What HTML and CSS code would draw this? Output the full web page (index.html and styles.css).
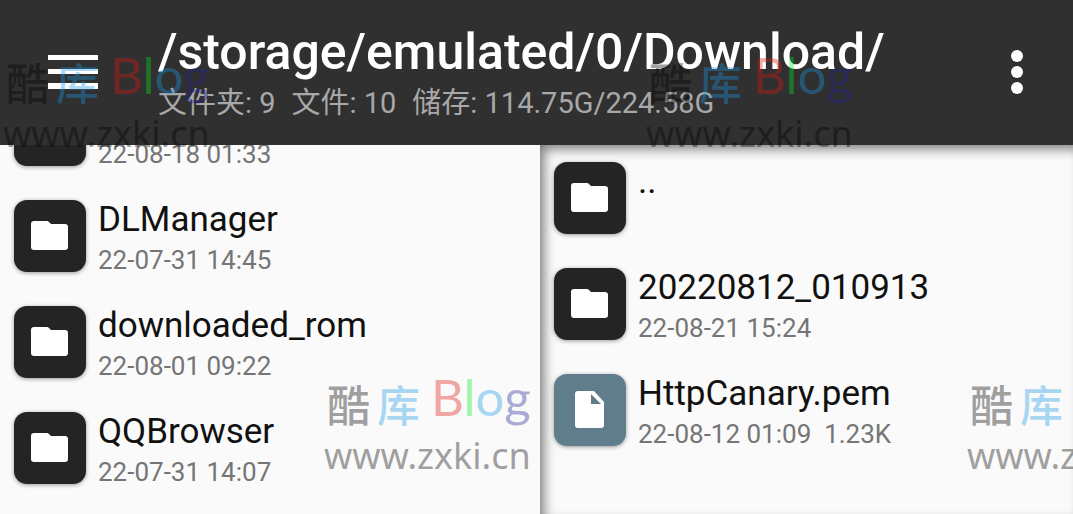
FILE: index.html
```html
<!DOCTYPE html>
<html lang="zh-CN">
<head>
    <meta charset="UTF-8">
    <meta name="viewport" content="width=device-width, initial-scale=1.0">
    <title>/storage/emulated/0/Download/</title>
    <link rel="stylesheet" href="styles.css">
</head>
<body>
    <svg class="sprite" aria-hidden="true">
        <symbol id="folder" viewBox="0 0 72 72">
            <path d="M20 21h13q1 0 2 1l2 2h14q3 0 3 3v20q0 3-3 3H20q-3 0-3-3V24q0-3 3-3z"/>
        </symbol>
        <symbol id="file" viewBox="0 0 72 72">
            <path fill-rule="evenodd" d="M24 17h16l10 11v23q0 3-3 3H24q-3 0-3-3V20q0-3 3-3zM37 20v10h10z"/>
        </symbol>
    </svg>

    <header class="toolbar">
        <button class="menu-btn" type="button" aria-label="菜单">
            <svg width="50" height="34" viewBox="0 0 50 34"><path d="M0 0h50v5H0zM0 14h50v5H0zM0 28h50v6H0z"/></svg>
        </button>
        <div class="heading">
            <h1>/storage/emulated/0/Download/</h1>
            <p class="stats">
                <span>文件夹: 9</span>
                <span>文件: 10</span>
                <span>储存: 114.75G/224.58G</span>
            </p>
        </div>
        <button class="more-btn" type="button" aria-label="更多">
            <svg width="12" height="44" viewBox="0 0 12 44"><circle cx="6" cy="6" r="6"/><circle cx="6" cy="22" r="6"/><circle cx="6" cy="38" r="6"/></svg>
        </button>
    </header>

    <main class="panes">
        <section class="pane">
            <ul class="list scrolled">
                <li class="row">
                    <svg class="icon"><use href="#folder"/></svg>
                    <div class="info"><span class="name"></span><span class="date">22-08-18 01:33</span></div>
                </li>
                <li class="row">
                    <svg class="icon"><use href="#folder"/></svg>
                    <div class="info"><span class="name">DLManager</span><span class="date">22-07-31 14:45</span></div>
                </li>
                <li class="row">
                    <svg class="icon"><use href="#folder"/></svg>
                    <div class="info"><span class="name">downloaded_rom</span><span class="date">22-08-01 09:22</span></div>
                </li>
                <li class="row">
                    <svg class="icon"><use href="#folder"/></svg>
                    <div class="info"><span class="name">QQBrowser</span><span class="date">22-07-31 14:07</span></div>
                </li>
            </ul>
        </section>
        <section class="pane active">
            <ul class="list">
                <li class="row">
                    <svg class="icon"><use href="#folder"/></svg>
                    <div class="info"><span class="name">..</span></div>
                </li>
                <li class="row">
                    <svg class="icon"><use href="#folder"/></svg>
                    <div class="info"><span class="name">20220812_010913</span><span class="date">22-08-21 15:24</span></div>
                </li>
                <li class="row">
                    <svg class="icon file"><use href="#file"/></svg>
                    <div class="info"><span class="name">HttpCanary.pem</span><span class="date">22-08-12 01:09 &nbsp;1.23K</span></div>
                </li>
            </ul>
        </section>
    </main>

    <!-- Watermarks -->
    <div class="watermark wm-1">
        <div class="brand"><span class="cjk">酷</span><span class="cjk blue">库</span><span class="blog"><i class="red">B</i><i class="green">l</i><i class="blue">o</i><i class="navy">g</i></span></div>
        <div class="site">www.zxki.cn</div>
    </div>
    <div class="watermark wm-2">
        <div class="brand"><span class="cjk">酷</span><span class="cjk blue">库</span><span class="blog"><i class="red">B</i><i class="green">l</i><i class="blue">o</i><i class="navy">g</i></span></div>
        <div class="site">www.zxki.cn</div>
    </div>
    <div class="watermark wm-3">
        <div class="brand"><span class="cjk">酷</span><span class="cjk blue">库</span><span class="blog"><i class="red">B</i><i class="green">l</i><i class="blue">o</i><i class="navy">g</i></span></div>
        <div class="site">www.zxki.cn</div>
    </div>
    <div class="watermark wm-4">
        <div class="brand"><span class="cjk">酷</span><span class="cjk blue">库</span><span class="blog"><i class="red">B</i><i class="green">l</i><i class="blue">o</i><i class="navy">g</i></span></div>
        <div class="site">www.zxki.cn</div>
    </div>
</body>
</html>
```
FILE: styles.css
```css
* {
    box-sizing: border-box;
}
body {
    font-family: Roboto, "Noto Sans CJK SC", sans-serif;
    background: #fafafa;
    color: #111;
    margin: 0;
    height: 100vh;
    display: flex;
    flex-direction: column;
    position: relative;
    overflow: hidden;
}
.sprite {
    display: none;
}
.toolbar {
    display: flex;
    align-items: center;
    background: #303030;
    color: #fff;
    padding: 22px 50px 20px 48px;
}
.toolbar button {
    background: none;
    border: 0;
    padding: 0 0 4px;
    cursor: pointer;
}
.toolbar svg {
    display: block;
    fill: #fff;
}
.heading {
    flex: 1;
    margin-left: 60px;
}
h1 {
    font-size: 50px;
    font-weight: 500;
    line-height: 60px;
    margin: 0;
}
.stats {
    display: flex;
    gap: 16px;
    margin: 0;
    font-size: 29px;
    line-height: 43px;
    color: #a8a8a8;
}
.panes {
    flex: 1;
    min-height: 0;
    display: grid;
    grid-template-columns: 540fr 533fr;
}
.pane {
    overflow: hidden;
}
.pane.active {
    box-shadow: inset 6px 6px 12px -2px rgba(0, 0, 0, 0.5);
}
.list {
    list-style: none;
    margin: 0;
    padding: 0;
}
.list.scrolled {
    margin-top: -68px; /* first row is partly scrolled away */
}
.row {
    display: flex;
    gap: 12px;
    padding: 17px 14px;
}
.icon {
    flex: none;
    width: 72px;
    height: 72px;
    border-radius: 13px;
    background: #242424;
    fill: #fff;
    box-shadow: 0 1px 4px rgba(0, 0, 0, 0.4);
}
.icon.file {
    background: #607d8b;
}
.info {
    display: flex;
    flex-direction: column;
    height: 72px;
}
.name {
    font-size: 35px;
    line-height: 40px;
    min-height: 40px;
}
.date {
    font-size: 26px;
    line-height: 40px;
    color: #757575;
}
.watermark {
    position: absolute;
    width: 210px;
    color: #000;
    opacity: 0.36;
    pointer-events: none;
    white-space: nowrap;
}
.wm-1 {
    left: 3px;
    top: 48px;
}
.wm-2 {
    left: 646px;
    top: 48px;
}
.wm-3 {
    left: 324px;
    top: 370px;
}
.wm-4 {
    left: 967px;
    top: 370px;
}
.brand {
    display: flex;
    align-items: flex-start;
    height: 64px;
    padding-left: 3px;
}
.cjk {
    font-size: 43px;
    line-height: 74px;
    font-weight: 500;
    margin-right: 7px;
}
.blog {
    font-family: Lato, sans-serif;
    font-size: 51px;
    line-height: 54px;
    margin-left: 4px;
}
.blog i {
    font-style: normal;
}
.site {
    font-family: "Noto Sans", sans-serif;
    font-size: 36px;
    line-height: 44px;
}
.red {
    color: #e01810;
}
.green {
    color: #00f020;
}
.blue {
    color: #1898e8;
}
.navy {
    color: #202098;
}
```
